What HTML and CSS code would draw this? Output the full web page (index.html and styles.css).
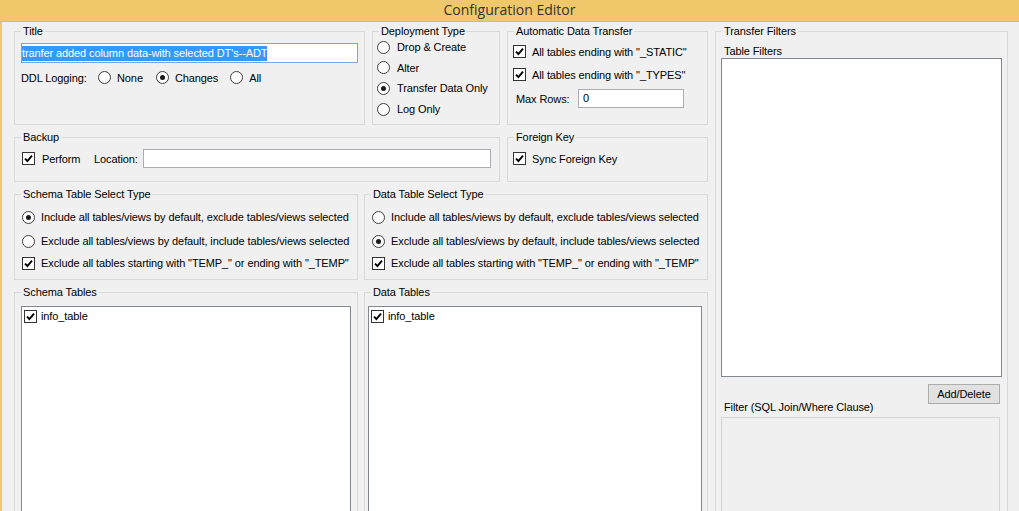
FILE: index.html
```html
<!DOCTYPE html>
<html>
<head>
<meta charset="utf-8">
<title>Configuration Editor</title>
<link rel="stylesheet" href="styles.css">
</head>
<body>
<div class="window">
  <div class="titlebar">Configuration Editor</div>
  <div class="client">
    <div class="main">
      <div class="left">
        <div class="row r1">
          <fieldset class="grp g-title">
            <legend>Title</legend>
            <div class="body">
              <div class="textbox focus"><span class="sel">tranfer added column data-with selected DT's--ADT</span></div>
              <div class="ddl">
                <span class="ddl-lbl">DDL Logging:</span>
                <label class="opt o-none"><span class="rb"></span>None</label>
                <label class="opt o-changes"><span class="rb on"></span>Changes</label>
                <label class="opt o-all"><span class="rb"></span>All</label>
              </div>
            </div>
          </fieldset>
          <fieldset class="grp g-deploy">
            <legend>Deployment Type</legend>
            <div class="body">
              <label class="opt"><span class="rb"></span>Drop &amp; Create</label>
              <label class="opt"><span class="rb"></span>Alter</label>
              <label class="opt"><span class="rb on"></span>Transfer Data Only</label>
              <label class="opt"><span class="rb"></span>Log Only</label>
            </div>
          </fieldset>
          <fieldset class="grp g-adt">
            <legend>Automatic Data Transfer</legend>
            <div class="body">
              <label class="opt"><span class="cb on"><svg viewBox="0 0 11 11"><path d="M2 5.6 4.4 8 9 2.6"/></svg></span>All tables ending with "_STATIC"</label>
              <label class="opt"><span class="cb on"><svg viewBox="0 0 11 11"><path d="M2 5.6 4.4 8 9 2.6"/></svg></span>All tables ending with "_TYPES"</label>
              <div class="maxrows">
                <span class="mr-lbl">Max Rows:</span>
                <div class="textbox mr-input">0</div>
              </div>
            </div>
          </fieldset>
        </div>
        <div class="row r2">
          <fieldset class="grp g-backup">
            <legend>Backup</legend>
            <div class="body">
              <label class="opt"><span class="cb on"><svg viewBox="0 0 11 11"><path d="M2 5.6 4.4 8 9 2.6"/></svg></span><span class="perform">Perform</span></label>
              <span class="loc-lbl">Location:</span>
              <div class="textbox loc-input"></div>
            </div>
          </fieldset>
          <fieldset class="grp g-fk">
            <legend>Foreign Key</legend>
            <div class="body">
              <label class="opt"><span class="cb on"><svg viewBox="0 0 11 11"><path d="M2 5.6 4.4 8 9 2.6"/></svg></span>Sync Foreign Key</label>
            </div>
          </fieldset>
        </div>
        <div class="row r3">
          <fieldset class="grp g-select">
            <legend>Schema Table Select Type</legend>
            <div class="body">
              <label class="opt"><span class="rb on"></span>Include all tables/views by default, exclude tables/views selected</label>
              <label class="opt"><span class="rb"></span>Exclude all tables/views by default, include tables/views selected</label>
              <label class="opt last"><span class="cb on"><svg viewBox="0 0 11 11"><path d="M2 5.6 4.4 8 9 2.6"/></svg></span>Exclude all tables starting with "TEMP_" or ending with "_TEMP"</label>
            </div>
          </fieldset>
          <fieldset class="grp g-select">
            <legend>Data Table Select Type</legend>
            <div class="body">
              <label class="opt"><span class="rb"></span>Include all tables/views by default, exclude tables/views selected</label>
              <label class="opt"><span class="rb on"></span>Exclude all tables/views by default, include tables/views selected</label>
              <label class="opt last"><span class="cb on"><svg viewBox="0 0 11 11"><path d="M2 5.6 4.4 8 9 2.6"/></svg></span>Exclude all tables starting with "TEMP_" or ending with "_TEMP"</label>
            </div>
          </fieldset>
        </div>
        <div class="row r4">
          <fieldset class="grp g-schema-tables">
            <legend>Schema Tables</legend>
            <div class="body">
              <div class="listbox">
                <label class="item"><span class="cb on"><svg viewBox="0 0 11 11"><path d="M2 5.6 4.4 8 9 2.6"/></svg></span>info_table</label>
              </div>
            </div>
          </fieldset>
          <fieldset class="grp g-data-tables">
            <legend>Data Tables</legend>
            <div class="body">
              <div class="listbox">
                <label class="item"><span class="cb on"><svg viewBox="0 0 11 11"><path d="M2 5.6 4.4 8 9 2.6"/></svg></span>info_table</label>
              </div>
            </div>
          </fieldset>
        </div>
      </div>
      <fieldset class="grp g-transfer">
        <legend>Transfer Filters</legend>
        <div class="body">
          <div class="caption">Table Filters</div>
          <div class="listbox tf-list"></div>
          <div class="btnrow"><button class="btn" type="button">Add/Delete</button></div>
          <div class="caption filter-cap">Filter (SQL Join/Where Clause)</div>
          <div class="filterbox"></div>
        </div>
      </fieldset>
    </div>
  </div>
</div>
</body>
</html>
```

FILE: styles.css
```css
* { box-sizing: border-box; }

html, body {
  margin: 0;
  padding: 0;
  width: 1019px;
  height: 511px;
  overflow: hidden;
  background: #f0f0f0;
}

body {
  font-family: "Liberation Sans", Arial, sans-serif;
  font-size: 11px;
  letter-spacing: -0.1px;
  color: #000;
}

.window {
  height: 511px;
  overflow: hidden;
}

.titlebar {
  height: 22px;
  background: #f0c86c;
  border-bottom: 1px solid #e2b85c;
  text-align: center;
  font-family: "Open Sans", "Noto Sans", sans-serif;
  font-size: 14px;
  letter-spacing: 0;
  line-height: 19px;
  color: #333;
}

.client {
  border-left: 2px solid #f0c86c;
  padding: 3px 0 0 12px;
  height: 489px;
}

.main {
  display: grid;
  grid-template-columns: 694px 293px;
  column-gap: 7px;
  height: 640px;
}

.left {
  display: grid;
  grid-template-rows: 100px 51px 92px 1fr;
  row-gap: 6px;
}

.row {
  display: flex;
  gap: 7px;
}

.r3, .r4 { gap: 6px; }
.r3 > .grp, .r4 > .grp { flex: 1 1 0; }

/* group box */
.grp {
  margin: 0;
  padding: 0;
  min-width: 0;
  border: 1px solid #d9d9d9;
}

.grp > legend {
  margin-left: 6px;
  padding: 0 2px;
  line-height: 13px;
  font-size: 11px;
}

.g-title { width: 351px; }
.g-deploy { width: 128px; }
.g-adt { width: 201px; }
.g-backup { width: 486px; }
.g-fk { width: 201px; }

/* controls */
.opt {
  display: flex;
  align-items: center;
  gap: 6px;
  white-space: nowrap;
}

.rb {
  flex: none;
  width: 13px;
  height: 13px;
  border: 1px solid #3e3e3e;
  border-radius: 50%;
  background: #fff;
  display: flex;
  align-items: center;
  justify-content: center;
}

.rb.on::after {
  content: "";
  width: 5px;
  height: 5px;
  border-radius: 50%;
  background: #1a1a1a;
}

.cb {
  flex: none;
  width: 13px;
  height: 13px;
  border: 1px solid #333;
  background: #fff;
  display: flex;
}

.cb svg {
  width: 11px;
  height: 11px;
  fill: none;
  stroke: #000;
  stroke-width: 1.9;
}

.textbox {
  background: #fff;
  border: 1px solid #abadb3;
}

/* title */
.g-title .body { padding: 5px 6px 0 6px; }

.textbox.focus {
  height: 20px;
  border-color: #74a9e0;
  padding-top: 2px;
  white-space: nowrap;
}

.sel {
  display: inline-block;
  background: #3399ff;
  color: #fff;
  line-height: 15px;
  height: 15px;
}

.ddl {
  display: flex;
  align-items: center;
  height: 13px;
  margin-top: 8px;
}

.ddl-lbl { width: 77px; flex: none; }
.o-changes { margin-left: 13px; }
.o-all { margin-left: 12px; }

/* deployment */
.g-deploy .body {
  padding-left: 4px;
  margin-top: -1px;
}
.g-deploy .opt { height: 20.6px; gap: 7px; }

/* automatic data transfer */
.g-adt .body { padding: 2px 0 0 5px; }
.g-adt .opt { height: 23px; gap: 6px; }

.maxrows {
  display: flex;
  align-items: center;
  margin-top: 3px;
  padding-left: 3px;
  height: 19px;
}

.mr-lbl { width: 62px; flex: none; }

.mr-input {
  width: 106px;
  height: 19px;
  padding-left: 4px;
  line-height: 17px;
}

/* backup */
.g-backup .body {
  display: flex;
  align-items: center;
  height: 19px;
  margin-top: 5px;
  padding-left: 7px;
}

.g-backup .opt { gap: 7px; }
.perform { width: 52px; }
.loc-lbl { width: 49px; flex: none; }
.loc-input { width: 348px; height: 19px; }

/* foreign key */
.g-fk .body {
  display: flex;
  align-items: center;
  height: 19px;
  margin-top: 5px;
  padding-left: 5px;
}

/* select type */
.g-select .body { padding: 4px 0 0 7px; }
.g-select .opt { height: 24px; }
.g-select .opt.last { height: 20px; }

/* tables */
.g-schema-tables .body { padding: 7px 6px 0 6px; }
.g-data-tables .body { padding: 7px 5px 0 3px; }

.listbox {
  background: #fff;
  border: 1px solid #828790;
  height: 400px;
  padding: 0 2px;
}

.item {
  display: flex;
  align-items: center;
  gap: 4px;
  height: 18px;
}

/* transfer filters */
.g-transfer .body { padding: 7px 5px 0 5px; }

.caption {
  line-height: 13px;
  padding-left: 3px;
}

.tf-list { height: 319px; }

.btnrow {
  display: flex;
  justify-content: flex-end;
  margin-top: 7px;
  padding-right: 2px;
}

.btn {
  width: 72px;
  height: 20px;
  margin: 0;
  padding: 0;
  background: #e1e1e1;
  border: 1px solid #adadad;
  border-radius: 0;
  font-family: "Liberation Sans", Arial, sans-serif;
  font-size: 11px;
  letter-spacing: -0.1px;
  color: #000;
}

.filter-cap { margin-top: -3px; }

.filterbox {
  margin-top: 3px;
  margin-right: 2px;
  height: 200px;
  background: #f0f0f0;
  border: 1px solid #d4d4d4;
}
```
